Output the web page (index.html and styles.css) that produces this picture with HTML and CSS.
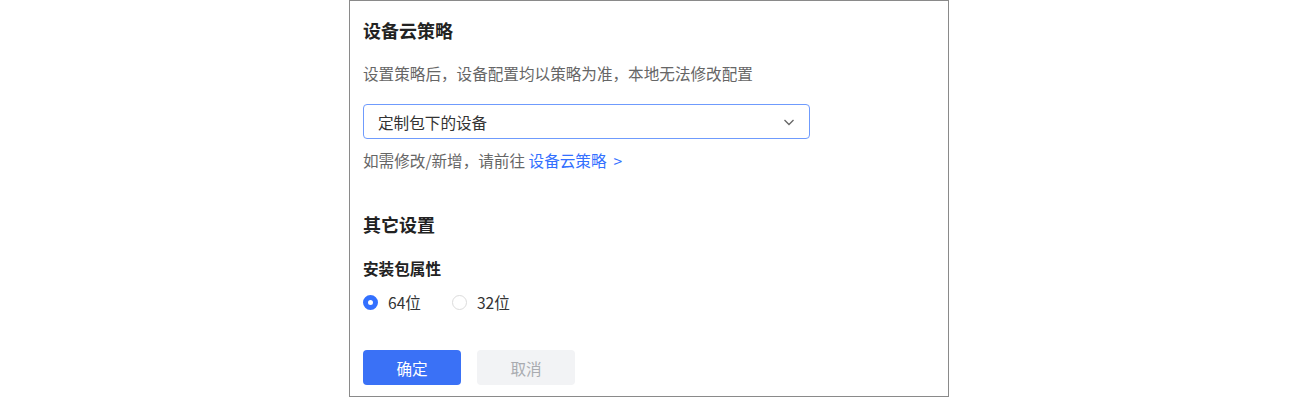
FILE: index.html
```html
<!DOCTYPE html>
<html lang="zh-CN">
<head>
  <meta charset="UTF-8" />
  <title>设备云策略</title>
  <link rel="stylesheet" href="styles.css">
</head>
<body>

<div class="panel">
  <div class="section-title">设备云策略</div>
  <div class="desc">设置策略后，设备配置均以策略为准，本地无法修改配置</div>

  <div class="select">
    <span>定制包下的设备</span>
    <svg class="chevron" width="12" height="12" viewBox="0 0 12 12">
      <path d="M1.5 4 L6 8.5 L10.5 4" fill="none" stroke="#666" stroke-width="1.3" />
    </svg>
  </div>

  <div class="hint">如需修改/新增，请前往 <a class="link" href="#">设备云策略&nbsp;&nbsp;&gt;</a></div>

  <div class="section-title other">其它设置</div>
  <div class="field-label">安装包属性</div>

  <div class="radios">
    <label class="radio checked"><span class="dot"></span>64位</label>
    <label class="radio"><span class="dot"></span>32位</label>
  </div>

  <div class="actions">
    <button class="btn-ok">确定</button>
    <button class="btn-cancel">取消</button>
  </div>
</div>

</body>
</html>
```
FILE: styles.css
```css
* { box-sizing: border-box; }
body, html {
  margin: 0;
  padding: 0;
  background: #fff;
  font-family: "Noto Sans CJK SC", "Noto Sans", sans-serif;
  color: #333;
}
body { padding-right: 1px; }
.panel {
  width: 600px;
  height: 397px;
  margin: 0 auto;
  border: 1px solid #8a8a8a;
  padding: 16px 13px 0;
}
.section-title {
  font-size: 18px;
  line-height: 26px;
  font-weight: 700;
  color: #222;
}
.desc {
  margin-top: 19px;
  font-size: 15.6px;
  line-height: 22px;
  color: #666;
}
.select {
  margin-top: 20px;
  width: 447px;
  height: 35px;
  border: 1px solid #6f9bfd;
  border-radius: 4px;
  padding: 0 14px;
  display: flex;
  align-items: center;
  justify-content: space-between;
  font-size: 15.6px;
  color: #333;
}
.hint {
  margin-top: 10px;
  font-size: 15.6px;
  line-height: 22px;
  color: #666;
}
.link {
  color: #3370ff;
  text-decoration: none;
}
.section-title.other { margin-top: 40px; }
.field-label {
  margin-top: 20px;
  font-size: 15.6px;
  line-height: 22px;
  font-weight: 700;
  color: #222;
}
.radios {
  margin-top: 12px;
  display: flex;
  gap: 31px;
  font-size: 15.6px;
  line-height: 22px;
  color: #333;
}
.radio {
  display: flex;
  align-items: center;
  gap: 10px;
}
.dot {
  width: 15px;
  height: 15px;
  border-radius: 50%;
  border: 1px solid #dcdcdc;
  background: #fff;
}
.radio.checked .dot {
  border: 5px solid #3370ff;
  background: #fff;
}
.actions {
  margin-top: 37px;
  display: flex;
  gap: 16px;
}
.btn-ok, .btn-cancel {
  width: 98px;
  height: 35px;
  border: none;
  border-radius: 4px;
  font-family: inherit;
  font-size: 15.6px;
}
.btn-ok {
  background: #3a71f6;
  color: #fff;
}
.btn-cancel {
  background: #f2f3f5;
  color: #a9abb0;
}
```
